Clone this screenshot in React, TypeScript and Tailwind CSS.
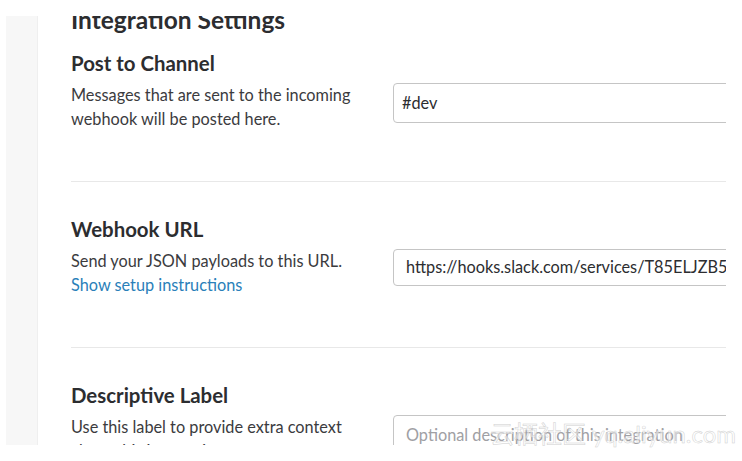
import React from 'react';

const font = { fontFamily: 'Lato, "Noto Sans CJK SC", sans-serif' };

interface SectionProps {
  title: string;
  children: React.ReactNode;
  field: React.ReactNode;
  last?: boolean;
}

function Section({ title, children, field, last }: SectionProps) {
  return (
    <div className={last ? 'pt-[33px]' : 'pt-[33px] pb-[50px] border-b border-[#e8e8e8] w-[800px]'}>
      <h2 className="text-[20.4px] leading-[28px] font-bold text-[#2c2d30]">{title}</h2>
      <div className="mt-[6px] flex">
        <div className="w-[322px] shrink-0 pr-[28px] text-[16.3px] leading-[24px] text-[#3b3b3e]">{children}</div>
        <div className="w-[420px] shrink-0">{field}</div>
      </div>
    </div>
  );
}

export default function App() {
  return (
    <div className="relative w-[742px] h-[461px] bg-white" style={font}>
      <div className="ml-[6px] pt-[16px]">
        <div className="flex w-[720px] h-[429px] overflow-hidden">
          {/* left rail */}
          <div className="w-[32px] shrink-0 bg-[#f7f7f7] border-r border-[#efefef]" />

          <div className="pl-[33px] -mt-[12px]">
            <h1 className="text-[24.5px] leading-[32px] font-bold text-[#2c2d30]">Integration Settings</h1>

            <div className="-mt-[20px]">
              <Section
                title="Post to Channel"
                field={
                  <div className="h-[40px] border border-[#c5c5c5] rounded-[4px] pl-[8px] flex items-center text-[16.3px] text-[#2c2d30]">
                    #dev
                  </div>
                }
              >
                Messages that are sent to the incoming webhook will be posted here.
              </Section>
            </div>

            <Section
              title="Webhook URL"
              field={
                <div className="h-[37px] border border-[#c5c5c5] rounded-[4px] pl-[12px] flex items-center text-[16.3px] text-[#2c2d30] whitespace-nowrap overflow-hidden">
                  https://hooks.slack.com/services/T85ELJZB5/B8G4KQ7RF/x2Jw
                </div>
              }
            >
              <p>Send your JSON payloads to this URL.</p>
              <a className="text-[#2a80b9]">Show setup instructions</a>
            </Section>

            <Section
              last
              title="Descriptive Label"
              field={
                <div className="h-[40px] border border-[#c5c5c5] rounded-[4px] pl-[12px] flex items-center text-[16.3px] text-[#a0a0a4] whitespace-nowrap">
                  Optional description of this integration
                </div>
              }
            >
              Use this label to provide extra context about this integration.
            </Section>
          </div>
        </div>
      </div>

      {/* watermark */}
      <div className="absolute left-[490px] top-[419px] text-[24px] leading-[30px] text-white/50 [-webkit-text-stroke:0.5px_#cfcfcf] whitespace-nowrap">
        云栖社区 yq.aliyun.com
      </div>
    </div>
  );
}
